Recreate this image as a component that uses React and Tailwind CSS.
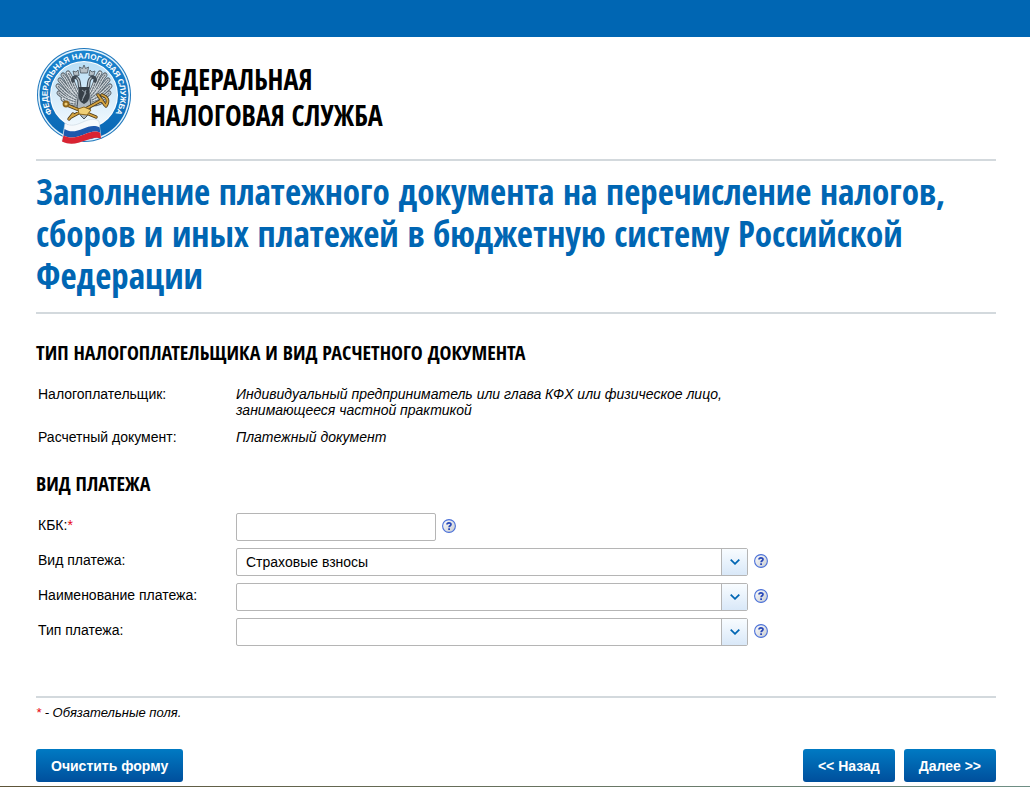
import { useState } from 'react';

const KINDS = ['', 'Страховые взносы'];

const HELP = { kbk: 'КБК', kind: 'Вид платежа', name: 'Наименование платежа', type: 'Тип платежа' };

// one wing, feather by feather; the other wing is its mirror
const FEATHERS = [
  'M42 47 C37 39 36 31 32 26',
  'M41 49 C33 41 32 33 27 28',
  'M41 51 C32 45 29 38 24 33',
  'M40 53 C31 49 27 44 22 39',
  'M40 55 C32 53 27 50 23 46',
  'M40 57 C34 57 30 55 27 52',
];

function Wing() {
  return (
    <g fill="none" strokeLinecap="round">
      {FEATHERS.map(d => <path key={d} d={d} stroke="#5d6871" strokeWidth="5" />)}
      {FEATHERS.map(d => <path key={d} d={d} stroke="#dfe5e9" strokeWidth="3" />)}
      {FEATHERS.map(d => <path key={d} d={d} stroke="#6c7881" strokeWidth="1.4" strokeDasharray="1.5 1.5" />)}
      <path d="M45 44 C42 40 45 34 41 31 C39 29 36 31 37 34" stroke="#3f4952" strokeWidth="3.4" />
      <path d="M45 44 C42 40 45 34 41 31" stroke="#b6c0c7" strokeWidth="1.4" />
      <path d="M38 28 L37 24 L40 25 L42 23 L43 28Z" fill="#b6c0c7" stroke="#4a545d" strokeWidth="0.8" />
    </g>
  );
}

function Emblem() {
  return (
    <svg viewBox="0 0 96 98" className="h-[98px] w-24 shrink-0" role="img" aria-label="ФНС">
      <defs>
        <linearGradient id="ring" x1="0" y1="0" x2="0" y2="1">
          <stop offset="0" stopColor="#1c84cf" />
          <stop offset="1" stopColor="#0867b4" />
        </linearGradient>
        <linearGradient id="disc" x1="0" y1="0" x2="0" y2="1">
          <stop offset="0" stopColor="#b9def5" />
          <stop offset="1" stopColor="#f2f9fe" />
        </linearGradient>
        <path id="arc" d="M20 71.5 A36.5 36.5 0 1 1 76 71.5" />
      </defs>
      <circle cx="48" cy="48" r="47" fill="#1d77bd" />
      <circle cx="48" cy="48" r="46" fill="#e4f3fc" />
      <circle cx="48" cy="48" r="44.5" fill="url(#ring)" />
      <circle cx="48" cy="48" r="34" fill="#ffffff" />
      <circle cx="48" cy="48" r="33" fill="url(#disc)" />
      <text fill="#ffffff" className="font-['Liberation_Sans'] text-[8px] font-bold">
        <textPath href="#arc" startOffset="50%" textAnchor="middle">ФЕДЕРАЛЬНАЯ НАЛОГОВАЯ СЛУЖБА</textPath>
      </text>
      {/* eagle */}
      <Wing />
      <g transform="translate(96 0) scale(-1 1)"><Wing /></g>
      <path d="M43 44 L41 60 L45 69 L48 72 L51 69 L55 60 L53 44Z" fill="#aeb8bf" stroke="#4a545d" />
      <path d="M44.5 26 L43.5 20 L46.5 21.5 L48 18 L49.5 21.5 L52.5 20 L51.5 26Z" fill="#b6c0c7" stroke="#4a545d" strokeWidth="0.8" />
      <path d="M43 40 H53 V51 C53 54 50 56 48 57 C46 56 43 54 43 51Z" fill="#363f47" />
      <path d="M46 43 L50 46 L47 51 M50 43 L46 54" fill="none" stroke="#9ba7b0" strokeWidth="0.9" />
      <g fill="none" stroke="#4e3c1b" strokeWidth="3.4" strokeLinecap="round">
        <path d="M31 58 L60 70 M35 70 L66 53 M62 48 L69 58 M66 48 C72 50 73 54 70 59 M37 67 L33 72" />
      </g>
      <g fill="none" stroke="#d5a441" strokeWidth="1.8" strokeLinecap="round">
        <path d="M31 58 L60 70 M35 70 L66 53 M62 48 L69 58 M66 48 C72 50 73 54 70 59 M37 67 L33 72" />
        <circle cx="30" cy="57" r="2.5" fill="#f0cf76" stroke="#8d661c" />
      </g>
      <path d="M42 62 L48 60 L55 63 L51 68 L43 67Z" fill="#f0cf76" stroke="#8d661c" />
      {/* flag */}
      <path d="M29 76 C41 84 51 67 63 74 L65 91 C54 86 42 102 26 94Z" fill="#f6f9fc" stroke="#c7d5e0" strokeWidth="0.6" />
      <path d="M28.5 82 C41 90 52 74 63.7 80.5 L64.3 86 C54 80 42 96 27.5 88.5Z" fill="#1d58ac" />
      <path d="M27.5 88.5 C42 96 54 80 64.3 86 L65 91.5 C54 87 42 102 26 94.5Z" fill="#d92332" />
    </svg>
  );
}

function Help({ topic }) {
  return (
    <button type="button" aria-label={`Справка: ${topic}`} className="shrink-0 pb-0.5">
      <svg viewBox="0 0 14 14" className="size-3.5">
        <defs>
          <linearGradient id="help" x1="0" y1="0" x2="1" y2="1">
            <stop offset="0" stopColor="#ffffff" />
            <stop offset="1" stopColor="#c6cad0" />
          </linearGradient>
        </defs>
        <circle cx="7" cy="7" r="6.4" fill="url(#help)" stroke="#4a70d8" strokeWidth="1.1" />
        <path d="M5 5.5 C5 3.4 9 3.4 9 5.4 C9 6.8 7.1 6.8 7.1 8.3" fill="none" stroke="#2747b8" strokeWidth="1.7" />
        <rect x="6.2" y="9.3" width="1.8" height="1.7" fill="#2747b8" />
      </svg>
    </button>
  );
}

function Row({ id, label, required, children }) {
  return (
    <div className="flex">
      <label htmlFor={id} className="w-[200px] shrink-0 pt-1 pl-0.5">
        {label}:{required && <span className="text-red-600">*</span>}
      </label>
      <div className="flex min-w-0 flex-1 items-center gap-1.5">
        {children}
        <Help topic={HELP[id]} />
      </div>
    </div>
  );
}

function Dropdown({ id, value, onChange }) {
  return (
    <div className="relative w-full max-w-[512px]">
      <select
        id={id}
        value={value}
        onChange={e => onChange(e.target.value)}
        className="block h-7 w-full appearance-none rounded-xs border border-[#b5b5b5] bg-white pr-8 pl-[9px]"
      >
        {KINDS.map(k => <option key={k} value={k}>{k}</option>)}
      </select>
      <span className="pointer-events-none absolute inset-y-px right-px flex w-[26px] items-center justify-center border-l border-[#b5b5b5] bg-linear-to-b from-[#f8fcff] to-[#d9e8f8]">
        <svg viewBox="0 0 10 6" className="h-1.5 w-2.5" fill="none" stroke="#0066b3" strokeWidth="1.8">
          <path d="M0.7 0.7 L5 4.8 L9.3 0.7" />
        </svg>
      </span>
    </div>
  );
}

function Button({ children, ...props }) {
  return (
    <button
      {...props}
      className="h-[33px] rounded-[3px] bg-linear-to-b from-[#007ac3] to-[#004f9c] px-[15px] text-sm font-bold text-white"
    >
      {children}
    </button>
  );
}

export default function App() {
  const [form, setForm] = useState({ kbk: '', kind: 'Страховые взносы', name: '', type: '' });
  const set = key => value => setForm(f => ({ ...f, [key]: value }));

  return (
    <div className="flex min-h-screen flex-col bg-white font-['Liberation_Sans',sans-serif] text-[14px] leading-4 text-black">
      <div className="h-[37px] bg-[#0066b3]" />

      <div className="pr-[34px] pl-9">
        <header className="flex items-center gap-[18px] border-b-2 border-[#d3d9dd] pt-[10px] pb-[14px]">
          <Emblem />
          <div className="pt-0.5 font-['Open_Sans_Condensed','Roboto_Condensed',sans-serif] text-[28px] leading-9 font-bold">
            ФЕДЕРАЛЬНАЯ<br />НАЛОГОВАЯ СЛУЖБА
          </div>
        </header>

        <h1 className="border-b-2 border-[#d3d9dd] pt-2.5 pb-[15px] font-['Open_Sans_Condensed','Roboto_Condensed',sans-serif] text-[35px] leading-[42px] font-bold text-[#0066b3]">
          Заполнение платежного документа на перечисление налогов, сборов и иных платежей в бюджетную систему Российской Федерации
        </h1>

        <form onSubmit={e => e.preventDefault()}>
          <h2 className="mt-6 mb-[18px] font-['Open_Sans_Condensed','Roboto_Condensed',sans-serif] text-xl leading-[30px] font-bold">
            ТИП НАЛОГОПЛАТЕЛЬЩИКА И ВИД РАСЧЕТНОГО ДОКУМЕНТА
          </h2>
          <dl className="flex flex-col gap-[11px]">
            <div className="flex">
              <dt className="w-[200px] shrink-0 pl-0.5">Налогоплательщик:</dt>
              <dd className="max-w-[512px] italic">
                Индивидуальный предприниматель или глава КФХ или физическое лицо, занимающееся частной практикой
              </dd>
            </div>
            <div className="flex">
              <dt className="w-[200px] shrink-0 pl-0.5">Расчетный документ:</dt>
              <dd className="italic">Платежный документ</dd>
            </div>
          </dl>

          <h2 className="mt-6 mb-3.5 font-['Open_Sans_Condensed','Roboto_Condensed',sans-serif] text-xl leading-[30px] font-bold">
            ВИД ПЛАТЕЖА
          </h2>
          <div className="flex flex-col gap-[7px]">
            <Row id="kbk" label="КБК" required>
              <input
                id="kbk"
                type="text"
                value={form.kbk}
                onChange={e => set('kbk')(e.target.value)}
                className="h-7 w-[200px] rounded-xs border border-[#b5b5b5] px-[9px]"
              />
            </Row>
            <Row id="kind" label="Вид платежа"><Dropdown id="kind" value={form.kind} onChange={set('kind')} /></Row>
            <Row id="name" label="Наименование платежа"><Dropdown id="name" value={form.name} onChange={set('name')} /></Row>
            <Row id="type" label="Тип платежа"><Dropdown id="type" value={form.type} onChange={set('type')} /></Row>
          </div>

          <p className="mt-[50px] border-t-2 border-[#d3d9dd] pt-[7px] text-[13px] italic">
            <span className="text-red-600">*</span> - Обязательные поля.
          </p>

          <div className="mt-7 mb-1 flex gap-[9px]">
            <div className="flex-1">
              <Button type="button" onClick={() => setForm({ kbk: '', kind: '', name: '', type: '' })}>Очистить форму</Button>
            </div>
            <Button type="button">&lt;&lt; Назад</Button>
            <Button type="submit">Далее &gt;&gt;</Button>
          </div>
        </form>
      </div>

      <div className="mt-auto h-px bg-linear-to-r from-[#5d5438] to-[#6f8f85]" />
    </div>
  );
}
